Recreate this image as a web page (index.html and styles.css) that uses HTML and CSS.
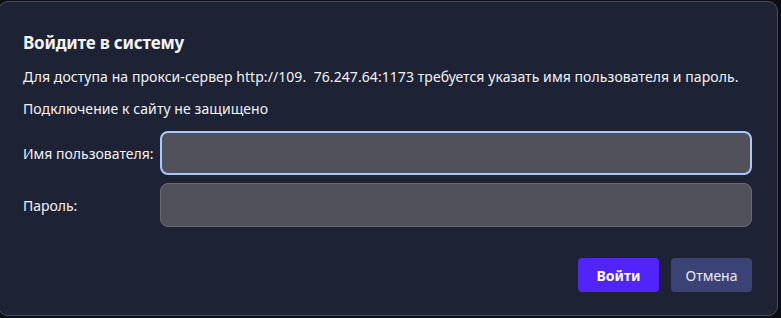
FILE: index.html
```html
<!DOCTYPE html>
<html lang="ru">
<head>
    <meta charset="UTF-8">
    <meta name="viewport" content="width=device-width, initial-scale=1.0">
    <title>Войдите в систему</title>
    <link rel="stylesheet" href="styles.css">
</head>
<body>
    <div class="dialog">
        <h1 class="title">Войдите в систему</h1>
        <p class="text">Для доступа на прокси-сервер http://109.&nbsp; 76.247.64:1173 требуется указать имя пользователя и пароль.</p>
        <p class="text">Подключение к сайту не защищено</p>
        <div class="form">
            <label for="user" class="label">Имя пользователя:</label>
            <input type="text" id="user" class="field focused">
            <label for="pass" class="label">Пароль:</label>
            <input type="password" id="pass" class="field">
        </div>
        <div class="buttons">
            <button class="btn btn_ok">Войти</button>
            <button class="btn btn_cancel">Отмена</button>
        </div>
    </div>
</body>
</html>
```

FILE: styles.css
```css
body {
    margin: 0;
    height: 318px;
    overflow: hidden;
    background: #0d0e14;
    font-family: 'Noto Sans', 'Open Sans', sans-serif;
    color: #f2f3f7;
}

.dialog {
    box-sizing: border-box;
    width: 780px;
    height: 315px;
    margin: 1px 0 0 -2px;
    padding: 29px 25px 0 24px;
    background: #1e2235;
    border: 1px solid #4b4e58;
    border-radius: 10px;
}

.title {
    margin: 0;
    font-size: 17px;
    letter-spacing: -0.2px;
    line-height: 24px;
    font-weight: 700;
}

.text {
    margin: 12px 0 0;
    font-size: 14px;
    letter-spacing: 0.07px;
    line-height: 20px;
}

.form {
    display: grid;
    grid-template-columns: 137px 1fr;
    row-gap: 8px;
    align-items: center;
    margin-top: 12px;
}

.label {
    font-size: 14px;
}

.field {
    box-sizing: border-box;
    height: 44px;
    width: 100%;
    margin: 0;
    background: #50515b;
    border: 1px solid #6b6c72;
    border-radius: 8px;
    color: #fff;
    outline: none;
}

.field.focused {
    border: 2px solid #a8c7fa;
}

.buttons {
    display: flex;
    justify-content: flex-end;
    gap: 12px;
    margin-top: 31px;
}

.btn {
    width: 81px;
    height: 34px;
    border: 0;
    border-radius: 4px;
    font-family: 'Noto Sans', 'Open Sans', sans-serif;
    font-size: 14px;
    color: #fff;
}

.btn_ok {
    background: #5024fb;
    font-weight: 700;
}

.btn_cancel {
    background: #3b4276;
    color: #e8eaf6;
}
```
